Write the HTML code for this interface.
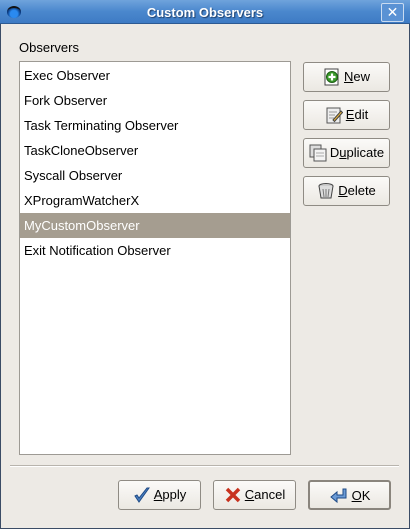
<!DOCTYPE html>
<html><head><style>
*{margin:0;padding:0;box-sizing:border-box}
body{width:410px;height:529px;overflow:hidden;font-family:"Liberation Sans","DejaVu Sans",sans-serif;font-size:13px;color:#000;background:#3a3a3a;position:relative}
.win{position:absolute;left:0;top:0;width:410px;height:529px;border:1px solid #3b4c66;background:#edeae5}
.title{position:absolute;left:-1px;top:-1px;width:410px;height:24px;background:linear-gradient(#6fa3dc,#4a87cd 50%,#3e7bc4);border-bottom:1px solid #2d5a92}
.title span{position:absolute;left:0;right:0;top:5px;text-align:center;color:#fff;font-weight:bold;font-size:13px;text-shadow:1px 1px 1px #1f3f6a}
.close{position:absolute;left:381px;top:3px;width:23px;height:19px;border:1px solid #c9dbf1;border-radius:2px;background:#5a92d4;color:#fff;font-weight:bold;text-align:center;line-height:16px;font-size:14px}
.eye{position:absolute;left:7px;top:6px;width:14px;height:12px;border-radius:50%;background:radial-gradient(circle at 50% 60%,#2a8af0 40%,#0a3a80 70%);border-top:2px solid #111}
.lbl{position:absolute;left:18px;top:39px}
.list{position:absolute;left:18px;top:60px;width:272px;height:394px;background:#fff;border:1px solid #9d9a94}
.row{height:25px;line-height:25px;padding-left:4px}
.sel{background:#a59d90;color:#fff}
.btn{position:absolute;border:1px solid #8f8b84;border-radius:3px;background:linear-gradient(#fbfaf8,#ebe8e2);text-align:center;line-height:27px}
.btn u{text-decoration:underline}
.ic{display:inline-block;vertical-align:middle;margin-right:3px;position:relative;top:-1px}
.sep{position:absolute;left:9px;top:464px;width:389px;height:2px;border-top:1px solid #b8b4ad;border-bottom:1px solid #fff}
</style></head><body>
<div class="win">
<div class="title"><div class="eye"></div><span>Custom Observers</span><div class="close">✕</div></div>
<div class="lbl">Observers</div>
<div class="list">
<div class="row" style="margin-top:1px">Exec Observer</div>
<div class="row">Fork Observer</div>
<div class="row">Task Terminating Observer</div>
<div class="row">TaskCloneObserver</div>
<div class="row">Syscall Observer</div>
<div class="row">XProgramWatcherX</div>
<div class="row sel">MyCustomObserver</div>
<div class="row">Exit Notification Observer</div>
</div>
<div class="btn" style="left:302px;top:61px;width:87px;height:30px"><svg class="ic" width="18" height="18"><rect x="2" y="1" width="13" height="16" fill="#fff" stroke="#444"/><circle cx="9" cy="9" r="5.5" fill="#3a9a2a" stroke="#1d5e14"/><path d="M9 5.5v7M5.5 9h7" stroke="#fff" stroke-width="2.2"/></svg><u>N</u>ew</div>
<div class="btn" style="left:302px;top:99px;width:87px;height:30px"><svg class="ic" width="18" height="18"><rect x="2" y="2" width="13" height="15" fill="#eee" stroke="#555"/><path d="M4 6h8M4 9h6M4 12h5" stroke="#999"/><path d="M8 14l8-9 1.5 1.5-8 9z" fill="#e7b23b" stroke="#444"/></svg><u>E</u>dit</div>
<div class="btn" style="left:302px;top:137px;width:87px;height:30px"><svg class="ic" width="18" height="18"><rect x="1" y="1" width="11" height="12" fill="#ddd" stroke="#555"/><rect x="5" y="5" width="12" height="12" fill="#f4f4f4" stroke="#555"/><path d="M7 9h8M7 12h8" stroke="#aaa"/></svg>D<u>u</u>plicate</div>
<div class="btn" style="left:302px;top:175px;width:87px;height:30px"><svg class="ic" width="18" height="18"><ellipse cx="9" cy="4" rx="7" ry="2.5" fill="#ccc" stroke="#444"/><path d="M2 4l2 12h10l2-12" fill="#ddd" stroke="#444"/><path d="M6 7l1 8M9 7v8M12 7l-1 8" stroke="#777"/></svg><u>D</u>elete</div>
<div class="sep"></div>
<div class="btn" style="left:117px;top:479px;width:83px;height:30px"><svg class="ic" width="18" height="18"><path d="M2 10l4 6 10-14-2 0-8 10-2-3z" fill="#4a7fc0" stroke="#1e4a86"/></svg><u>A</u>pply</div>
<div class="btn" style="left:212px;top:479px;width:83px;height:30px"><svg class="ic" width="18" height="18"><path d="M3 3l12 12M15 3L3 15" stroke="#c8321e" stroke-width="3.5"/></svg><u>C</u>ancel</div>
<div class="btn" style="left:307px;top:479px;width:83px;height:30px;border:2px solid #8a857d"><svg class="ic" width="20" height="18"><path d="M14 2h3v9H8v4L2 10l6-5v3h6z" fill="#6b9bd6" stroke="#1e4a86"/></svg><u>O</u>K</div>
</div>
</body></html>
